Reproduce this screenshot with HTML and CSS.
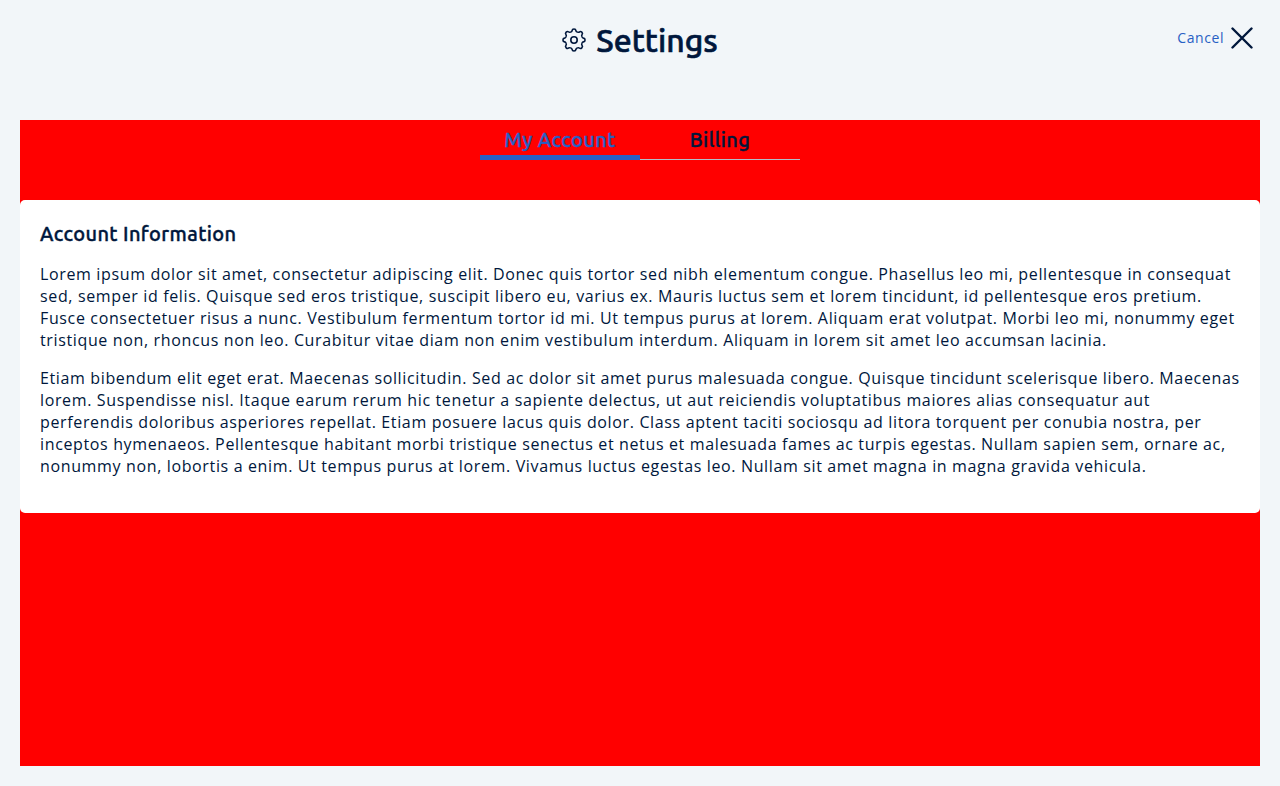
FILE: index.html
```html
<!DOCTYPE html>
<html lang="en">
<head>
<meta charset="utf-8">
<title>Settings</title>
<link rel="stylesheet" href="styles.css">
</head>
<body>
<header class="header">
  <h1 class="title">
    <svg class="gear" viewBox="0 0 24 24" aria-hidden="true">
      <defs><path id="tooth" d="M8.71 4.05C9.45 3.74 10 3.5 10.1 2.6C10.3.4 13.7.4 13.9 2.6C14 3.5 14.55 3.74 15.29 4.05"/></defs>
      <use href="#tooth"/>
      <use href="#tooth" transform="rotate(45 12 12)"/>
      <use href="#tooth" transform="rotate(90 12 12)"/>
      <use href="#tooth" transform="rotate(135 12 12)"/>
      <use href="#tooth" transform="rotate(180 12 12)"/>
      <use href="#tooth" transform="rotate(225 12 12)"/>
      <use href="#tooth" transform="rotate(270 12 12)"/>
      <use href="#tooth" transform="rotate(315 12 12)"/>
      <circle cx="12" cy="12" r="3.2"/>
    </svg>
    <span>Settings</span>
  </h1>
  <button class="cancel" type="button"><span>Cancel</span><svg class="cross" viewBox="0 0 22 22" aria-hidden="true"><path d="M1.5 1.5 20.5 20.5M20.5 1.5 1.5 20.5"/></svg></button>
</header>
<main class="content">
  <nav class="tabs" aria-label="Settings sections">
    <button class="tab tab-active" type="button">My Account</button>
    <button class="tab" type="button">Billing</button>
  </nav>
  <section class="card">
    <h2 class="card-title">Account Information</h2>
    <p>Lorem ipsum dolor sit amet, consectetur adipiscing elit. Donec quis tortor sed nibh elementum congue. Phasellus leo mi, pellentesque in consequat sed, semper id felis. Quisque sed eros tristique, suscipit libero eu, varius ex. Mauris luctus sem et lorem tincidunt, id pellentesque eros pretium. Fusce consectetuer risus a nunc. Vestibulum fermentum tortor id mi. Ut tempus purus at lorem. Aliquam erat volutpat. Morbi leo mi, nonummy eget tristique non, rhoncus non leo. Curabitur vitae diam non enim vestibulum interdum. Aliquam in lorem sit amet leo accumsan lacinia.</p>
    <p>Etiam bibendum elit eget erat. Maecenas sollicitudin. Sed ac dolor sit amet purus malesuada congue. Quisque tincidunt scelerisque libero. Maecenas lorem. Suspendisse nisl. Itaque earum rerum hic tenetur a sapiente delectus, ut aut reiciendis voluptatibus maiores alias consequatur aut perferendis doloribus asperiores repellat. Etiam posuere lacus quis dolor. Class aptent taciti sociosqu ad litora torquent per conubia nostra, per inceptos hymenaeos. Pellentesque habitant morbi tristique senectus et netus et malesuada fames ac turpis egestas. Nullam sapien sem, ornare ac, nonummy non, lobortis a enim. Ut tempus purus at lorem. Vivamus luctus egestas leo. Nullam sit amet magna in magna gravida vehicula.</p>
  </section>
</main>
</body>
</html>
```
FILE: styles.css
```css
* { box-sizing: border-box; }
body {
  margin: 0;
  min-height: 100vh;
  display: flex;
  flex-direction: column;
  background: #f2f6f9;
  color: #00173c;
  font: 16px/22px "Open Sans", sans-serif;
}
button {
  padding: 0;
  border: 0;
  background: none;
  color: inherit;
  font: inherit;
  cursor: pointer;
}
.header {
  display: grid;
  grid-template-columns: 1fr auto 1fr;
  align-items: center;
  height: 80px;
  padding: 0 27px;
}
.title,
.tab,
.card-title {
  font: 500 20px/27px Ubuntu, "Noto Sans", sans-serif;
  -webkit-text-stroke: 0.02em currentColor;
}
.tab,
.card-title {
  letter-spacing: 0.02em;
}
.title {
  grid-column: 2;
  display: flex;
  align-items: center;
  gap: 10px;
  margin: 0;
  font-size: 32px;
  line-height: 40px;
}
.gear {
  width: 24px;
  height: 24px;
  fill: none;
  stroke: currentColor;
  stroke-width: 1.6;
}
.cancel {
  justify-self: end;
  display: flex;
  align-items: center;
  gap: 7px;
  padding-bottom: 4px;
  color: #2760c4;
  font-size: 14px;
}
.cancel,
.card p {
  letter-spacing: 0.04em;
}
.cross {
  width: 22px;
  height: 22px;
  fill: none;
  stroke: #00173c;
  stroke-width: 2.4;
  stroke-linecap: round;
}
.content {
  flex: 1;
  margin: 40px 20px 20px;
  background: #ff0000;
}
.tabs {
  display: flex;
  justify-content: center;
  margin-bottom: 40px;
}
.tab {
  width: 160px;
  height: 40px;
  border-bottom: 1px solid #b4bcc8;
}
.tab-active {
  padding-top: 4px;
  border-bottom: 5px solid #2760c4;
  color: #2760c4;
}
.card {
  padding: 20px;
  border-radius: 5px;
  background: #ffffff;
}
.card-title {
  margin: 0 0 16px;
}
.card p {
  margin: 0 0 16px;
}
```
